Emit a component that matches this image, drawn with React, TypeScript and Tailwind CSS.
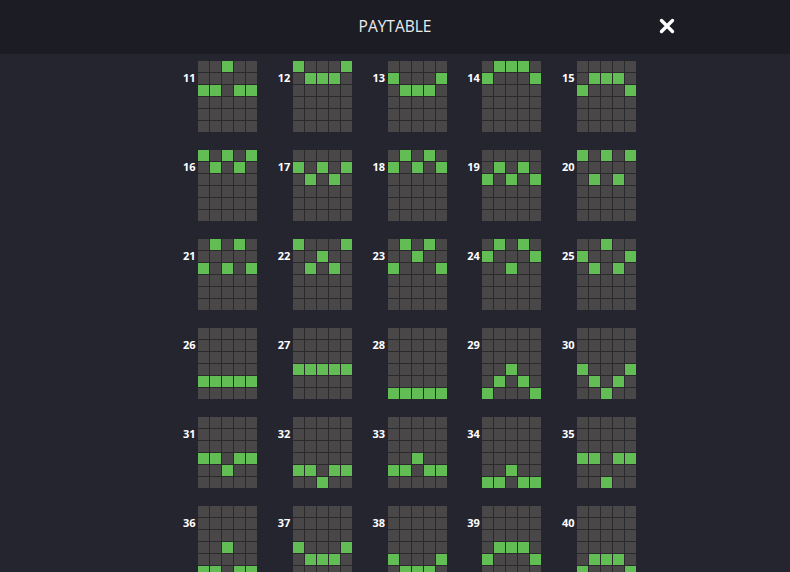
const lines: Record<number, number[]> = {
  11: [2, 2, 0, 2, 2],
  12: [0, 1, 1, 1, 0],
  13: [1, 2, 2, 2, 1],
  14: [1, 0, 0, 0, 1],
  15: [2, 1, 1, 1, 2],
  16: [0, 1, 0, 1, 0],
  17: [1, 2, 1, 2, 1],
  18: [1, 0, 1, 0, 1],
  19: [2, 1, 2, 1, 2],
  20: [0, 2, 0, 2, 0],
  21: [2, 0, 2, 0, 2],
  22: [0, 2, 1, 2, 0],
  23: [2, 0, 1, 0, 2],
  24: [1, 0, 2, 0, 1],
  25: [1, 2, 0, 2, 1],
  26: [4, 4, 4, 4, 4],
  27: [3, 3, 3, 3, 3],
  28: [5, 5, 5, 5, 5],
  29: [5, 4, 3, 4, 5],
  30: [3, 4, 5, 4, 3],
  31: [3, 3, 4, 3, 3],
  32: [4, 4, 5, 4, 4],
  33: [4, 4, 3, 4, 4],
  34: [5, 5, 4, 5, 5],
  35: [3, 3, 5, 3, 3],
  36: [5, 5, 3, 5, 5],
  37: [3, 4, 4, 4, 3],
  38: [4, 5, 5, 5, 4],
  39: [4, 3, 3, 3, 4],
  40: [5, 4, 4, 4, 5],
};

function LineGrid({ n }: { n: number }) {
  const rows = lines[n];
  const cells = [];
  for (let r = 0; r < 6; r++) {
    for (let c = 0; c < 5; c++) {
      const on = rows[c] === r;
      cells.push(
        <div key={r * 5 + c} className={on ? 'bg-[#62bd55]' : 'bg-[#4a4748]'} />
      );
    }
  }
  return (
    <div className="grid h-[71px] w-[59px] shrink-0 grid-cols-5 grid-rows-6 gap-px bg-[#2a2a2c]">
      {cells}
    </div>
  );
}

export default function App() {
  const nums = Object.keys(lines).map(Number);
  return (
    <div className="h-[572px] w-[790px] overflow-hidden bg-[#252530] font-['Open_Sans',sans-serif]">
      <div className="relative flex h-[54px] items-center justify-center bg-[#1c1c25]">
        <span className="text-[15.5px] text-[#ececec]">PAYTABLE</span>
        <button className="absolute left-[659px] top-[18px] h-[16px] w-[16px]">
          <svg viewBox="0 0 16 16" className="h-[16px] w-[16px]">
            <path d="M2.5 2.5 L13.5 13.5 M13.5 2.5 L2.5 13.5" stroke="#ffffff" strokeWidth="3.4" strokeLinecap="round" />
          </svg>
        </button>
      </div>
      <div className="grid grid-cols-[repeat(5,94.75px)] gap-y-[18px] pl-[183px] pt-[7px]">
        {nums.map((n) => (
          <div key={n} className="flex">
            <div className="mr-[3px] mt-[11px] w-[12px] text-right text-[11px] font-bold leading-[12px] text-white">
              {n}
            </div>
            <LineGrid n={n} />
          </div>
        ))}
      </div>
    </div>
  );
}
